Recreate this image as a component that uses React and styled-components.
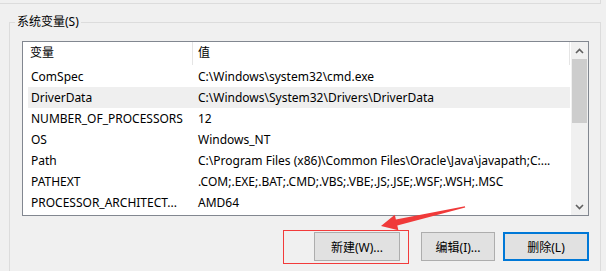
import React from "react";
import styled, { createGlobalStyle } from "styled-components";

// globals //

const GlobalStyle = createGlobalStyle`
  html, body {
    margin: 0;
    background: #f0f0f0;
  }
  body {
    font-family: "Noto Sans", "Noto Sans CJK SC", sans-serif;
    font-size: 12px;
    color: #000;
    overflow: hidden;
  }
  * {
    box-sizing: border-box;
  }
`;

// styled //

const Window = styled.div`
  position: relative;
  width: 606px;
  height: 271px;
  overflow: hidden;
  background: #f0f0f0;
`;

const PrevGroup = styled.div`
  width: 601px;
  height: 4px;
  border-right: 1px solid #dcdcdc;
  border-bottom: 1px solid #dcdcdc;
`;

const GroupBox = styled.fieldset`
  margin: 10px 0 0 9px;
  width: 592px;
  min-width: 0;
  padding: 0 0 20px;
  border: 1px solid #dcdcdc;
  border-bottom: none;
`;

const GroupLabel = styled.legend`
  margin-left: 5px;
  padding: 0 2px;
  line-height: 16px;
  font-size: 12px;
`;

const ListView = styled.div`
  display: flex;
  margin: 11px 0 0 12px;
  width: 567px;
  height: 175px;
  border: 1px solid #828790;
  background: #fff;
  overflow: hidden;
`;

const ListMain = styled.div`
  flex: 1;
  display: flex;
  flex-direction: column;
  overflow: hidden;
`;

const Header = styled.div`
  display: flex;
  flex: none;
  height: 24px;
`;

const HeaderCell = styled.div`
  width: ${(p) => p.$w}px;
  height: 23px;
  padding-left: ${(p) => p.$pad}px;
  line-height: 22px;
  border-right: 1px solid #e5e5e5;
  white-space: nowrap;
`;

const Row = styled.div`
  display: flex;
  flex: none;
  margin-left: 5px;
  width: 542px;
  height: 21px;
  line-height: 21px;
  background: ${(p) => (p.$hover ? "#efefef" : "transparent")};
`;

const NameCell = styled.div`
  width: 166px;
  padding-left: 3px;
  white-space: nowrap;
  overflow: hidden;
`;

const ValueCell = styled.div`
  flex: 1;
  padding-left: 4px;
  white-space: nowrap;
  overflow: hidden;
`;

const ScrollBar = styled.div`
  display: flex;
  flex-direction: column;
  width: 17px;
  background: #f0f0f0;
`;

const ScrollArrow = styled.div`
  display: flex;
  align-items: center;
  justify-content: center;
  height: 17px;
  flex: none;
`;

const Thumb = styled.div`
  height: 64px;
  margin: 0 1px;
  background: #cdcdcd;
`;

const Track = styled.div`
  flex: 1;
`;

const ButtonRow = styled.div`
  display: flex;
  justify-content: flex-end;
  margin-top: 16px;
  padding-right: 11px;
`;

const Button = styled.button`
  width: ${(p) => p.$w}px;
  height: 29px;
  margin-left: ${(p) => p.$gap || 0}px;
  padding: 0;
  font-family: inherit;
  font-size: 12px;
  color: #000;
  background: #e1e1e1;
  border: ${(p) => (p.$primary ? "2px solid #0078d7" : "1px solid #adadad")};
`;

const RedBox = styled.div`
  position: absolute;
  left: 283px;
  top: 230px;
  width: 126px;
  height: 34px;
  border: 1px solid #f23b3b;
  pointer-events: none;
`;

const Overlay = styled.svg`
  position: absolute;
  left: 0;
  top: 0;
  pointer-events: none;
`;

// data //

const rows = [
  ["ComSpec", "C:\\Windows\\system32\\cmd.exe"],
  ["DriverData", "C:\\Windows\\System32\\Drivers\\DriverData"],
  ["NUMBER_OF_PROCESSORS", "12"],
  ["OS", "Windows_NT"],
  ["Path", "C:\\Program Files (x86)\\Common Files\\Oracle\\Java\\javapath;C:..."],
  ["PATHEXT", ".COM;.EXE;.BAT;.CMD;.VBS;.VBE;.JS;.JSE;.WSF;.WSH;.MSC"],
  ["PROCESSOR_ARCHITECT...", "AMD64"],
];

function Chevron({ up }) {
  return (
    <svg width="9" height="6" viewBox="0 0 9 6">
      <polyline
        points={up ? "1,5 4.5,1.5 8,5" : "1,1 4.5,4.5 8,1"}
        fill="none"
        stroke="#606060"
        strokeWidth="1.6"
      />
    </svg>
  );
}

function App() {
  return (
    <Window>
      <GlobalStyle />
      <PrevGroup />
      <GroupBox>
        <GroupLabel>系统变量(S)</GroupLabel>
        <ListView>
          <ListMain>
            <Header>
              <HeaderCell $w={170} $pad={7}>变量</HeaderCell>
              <HeaderCell $w={377} $pad={5}>值</HeaderCell>
            </Header>
            {rows.map(([name, value], i) => (
              <Row key={name} $hover={i === 1}>
                <NameCell>{name}</NameCell>
                <ValueCell>{value}</ValueCell>
              </Row>
            ))}
          </ListMain>
          <ScrollBar>
            <ScrollArrow>
              <Chevron up />
            </ScrollArrow>
            <Thumb />
            <Track />
            <ScrollArrow>
              <Chevron />
            </ScrollArrow>
          </ScrollBar>
        </ListView>
        <ButtonRow>
          <Button $w={86}>新建(W)...</Button>
          <Button $w={74} $gap={21}>编辑(I)...</Button>
          <Button $w={86} $gap={8} $primary>删除(L)</Button>
        </ButtonRow>
      </GroupBox>
      <RedBox />
      <Overlay width="606" height="271" viewBox="0 0 606 271">
        <polygon
          points="381,226 394.8,214.7 395.9,219.6 464.9,206.3 465.2,207.6 397.3,225.4 398.4,230.3"
          fill="#f03a3a"
        />
      </Overlay>
    </Window>
  );
}

export default App;
